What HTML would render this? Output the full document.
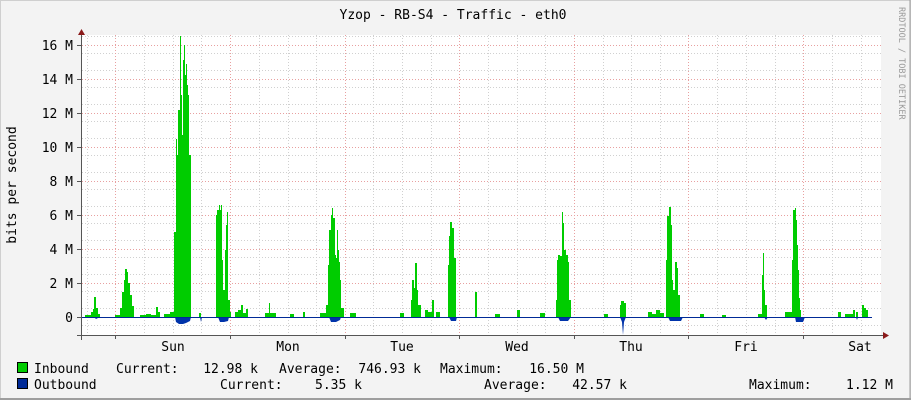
<!DOCTYPE html>
<html><head><meta charset="utf-8"><style>
body{margin:0;background:#f3f3f3;}
svg{display:block}
text{font-family:"DejaVu Sans Mono","Liberation Mono",monospace;font-size:13px;fill:#000}
</style></head><body>
<svg width="911" height="400" xmlns="http://www.w3.org/2000/svg">
<rect x="0" y="0" width="911" height="400" fill="#f3f3f3"/>
<rect x="0.5" y="0.5" width="910" height="399" fill="none" stroke="#cfcfcf"/>
<line x1="0" y1="399" x2="911" y2="399" stroke="#9e9e9e" stroke-width="2"/>
<line x1="910" y1="0" x2="910" y2="400" stroke="#9e9e9e" stroke-width="1"/>
<rect x="81" y="35" width="800" height="301" fill="#fff"/>
<g stroke="#d0d0d0" stroke-dasharray="1,2" stroke-width="1">
<path d="M82 36.5H881M82 53.5H881M82 70.5H881M82 87.5H881M82 104.5H881M82 121.5H881M82 138.5H881M82 155.5H881M82 172.5H881M82 189.5H881M82 206.5H881M82 223.5H881M82 240.5H881M82 257.5H881M82 274.5H881M82 291.5H881M82 308.5H881M82 325.5H881"/>
<path d="M87.5 35V336M144.5 35V336M173.5 35V336M201.5 35V336M259.5 35V336M288.5 35V336M316.5 35V336M373.5 35V336M402.5 35V336M431.5 35V336M488.5 35V336M517.5 35V336M545.5 35V336M603.5 35V336M631.5 35V336M660.5 35V336M717.5 35V336M746.5 35V336M775.5 35V336M832.5 35V336M861.5 35V336"/>
</g>
<g stroke="#e8a0a0" stroke-dasharray="1,2" stroke-width="1">
<path d="M82 45.5H881M82 79.5H881M82 113.5H881M82 147.5H881M82 181.5H881M82 215.5H881M82 249.5H881M82 283.5H881"/>
<path d="M115.5 35V336M230.5 35V336M345.5 35V336M459.5 35V336M574.5 35V336M688.5 35V336M803.5 35V336"/>
</g>
<!-- outbound -->
<path fill="#0033aa" d="M175 317L176 322L179 324L183 324L186 323L190 321L191 317ZM200 317L201 322L202 317ZM218 317L220 322L224 322L228 321L229 317ZM329 317L331 322L336 322L340 320L341 317ZM449 317L451 321L456 321L457 317ZM558 317L560 321L568 321L571 317ZM620 317L622 322L623 335L624 322L626 317ZM668 317L670 321L681 321L683 317ZM764 317L766 320L768 317ZM795 317L796 322L803 322L805 317ZM856 317L857 320L858 317ZM94 317L96 319L100 317Z"/>
<!-- inbound -->
<path fill="#00cc00" d="
M85 317V315H91V312H93V309H94V297H96V308H98V314H100V317Z
M115 317V315H120V308H122V292H124V280H125V269H127V272H128V283H130V295H132V306H134V317Z
M140 317V315H146V314H151V315H156V307H158V312H160V317Z
M164 317V314H170V312H174V232H176V139H177V155H178V110H180V36H181V95H182V135H183V60H184V45H185V75H186V64H187V85H188V95H189V155H191V317Z
M199 317V313H201V317Z
M216 317V215H217V210H219V205H220V210H221V205H222V260H223V290H225V250H226V225H227V212H228V300H230V312H231V317Z
M235 317V312H238V310H241V305H243V313H246V309H248V317Z
M265 317V313H269V303H270V313H276V317Z
M290 317V314H294V317ZM303 317V312H305V317Z
M320 317V313H326V305H328V265H329V230H331V215H332V208H333V218H335V255H336V258H337V230H338V250H339V262H340V280H341V308H344V317Z
M350 317V313H356V317Z
M400 317V313H404V317Z
M411 317V300H412V280H414V288H415V263H417V290H418V305H421V317Z
M425 317V310H428V312H432V300H434V317ZM436 317V312H440V317Z
M448 317V265H449V236H450V222H452V228H454V258H456V317Z
M475 317V292H477V317ZM495 317V314H500V317ZM517 317V310H520V317Z
M540 317V313H545V317Z
M556 317V300H557V260H558V255H560V256H562V212H563V223H564V250H566V255H568V262H569V300H571V317Z
M604 317V314H608V317Z
M620 317V305H621V301H624V303H626V317Z
M648 317V312H652V314H656V310H660V313H664V317Z
M666 317V260H667V216H669V207H671V225H672V280H673V290H675V262H677V268H678V295H680V317Z
M700 317V314H704V317ZM722 317V315H726V317Z
M758 317V314H762V275H763V253H764V290H765V305H767V317Z
M785 317V312H792V260H793V210H795V208H796V220H797V245H798V270H799V298H800V310H801V317Z
M838 317V312H841V317ZM845 317V314H853V310H855V317ZM856 317V312H858V317ZM862 317V305H864V308H866V310H868V317Z"/>
<line x1="82" y1="317.5" x2="872" y2="317.5" stroke="#002a97" stroke-width="1"/>
<!-- axes -->
<line x1="81.5" y1="340" x2="81.5" y2="34" stroke="#555"/>
<path d="M78 35L81.5 29L85 35Z" fill="#8b1a1a"/>
<line x1="77" y1="335.5" x2="884" y2="335.5" stroke="#555"/>
<path d="M883 332L889 335.5L883 339Z" fill="#8b1a1a"/>
<g stroke="#555"><path d="M77 45.5H81M77 79.5H81M77 113.5H81M77 147.5H81M77 181.5H81M77 215.5H81M77 249.5H81M77 283.5H81M77 317.5H81M115.5 336V339M230.5 336V339M345.5 336V339M459.5 336V339M574.5 336V339M688.5 336V339M803.5 336V339"/></g>
<text x="453" y="19" text-anchor="middle">Yzop - RB-S4 - Traffic - eth0</text>
<g text-anchor="end">
<text x="73" y="50">16 M</text><text x="73" y="84">14 M</text><text x="73" y="118">12 M</text><text x="73" y="152">10 M</text><text x="73" y="186">8 M</text><text x="73" y="220">6 M</text><text x="73" y="254">4 M</text><text x="73" y="288">2 M</text><text x="73" y="322">0</text>
</g>
<text transform="translate(16,185) rotate(-90)" text-anchor="middle">bits per second</text>
<text transform="translate(899,7) rotate(90)" style="font-size:8.5px;fill:#999">RRDTOOL / TOBI OETIKER</text>
<g text-anchor="middle">
<text x="173" y="351">Sun</text><text x="288" y="351">Mon</text><text x="402" y="351">Tue</text><text x="517" y="351">Wed</text><text x="631" y="351">Thu</text><text x="746" y="351">Fri</text><text x="860" y="351">Sat</text>
</g>
<rect x="17.5" y="362.5" width="10" height="10" fill="#00cc00" stroke="#000"/>
<rect x="17.5" y="378.5" width="10" height="10" fill="#002a97" stroke="#000"/>
<text x="34" y="373">Inbound</text>
<text x="116" y="373">Current:</text>
<text x="258" y="373" text-anchor="end">12.98 k</text>
<text x="279" y="373">Average:</text>
<text x="421" y="373" text-anchor="end">746.93 k</text>
<text x="440" y="373">Maximum:</text>
<text x="584" y="373" text-anchor="end">16.50 M</text>
<text x="34" y="389">Outbound</text>
<text x="220" y="389">Current:</text>
<text x="362" y="389" text-anchor="end">5.35 k</text>
<text x="484" y="389">Average:</text>
<text x="627" y="389" text-anchor="end">42.57 k</text>
<text x="749" y="389">Maximum:</text>
<text x="893" y="389" text-anchor="end">1.12 M</text>
</svg>
</body></html>
